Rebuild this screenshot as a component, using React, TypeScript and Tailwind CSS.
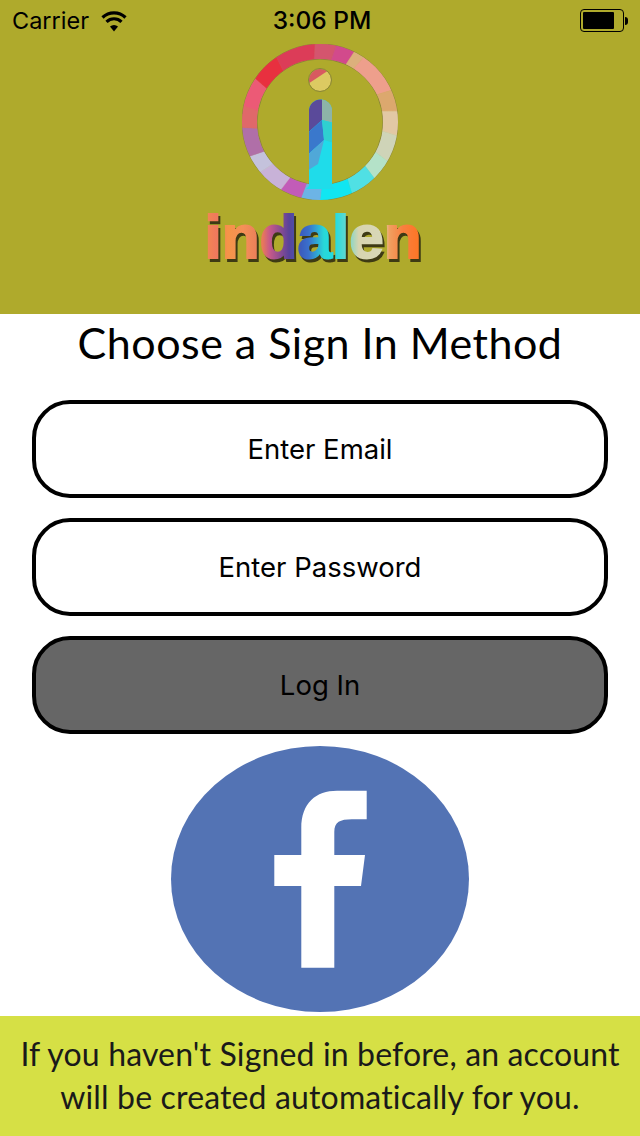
// Sign-in screen for the indalen app
const ringFacets: [number, number, string][] = [
  [-8, 8, "#d4556e"],
  [8, 22, "#d24a8c"],
  [22, 30, "#dcb07c"],
  [30, 62, "#ee9f8c"],
  [62, 78, "#dca86e"],
  [78, 96, "#e2c8a4"],
  [96, 116, "#cfd4b8"],
  [116, 132, "#b4e2c8"],
  [132, 152, "#50e0e4"],
  [152, 176, "#10e6f2"],
  [176, 190, "#6cb4e6"],
  [190, 206, "#c25cb8"],
  [206, 226, "#c8b2d8"],
  [226, 240, "#c4c2dc"],
  [240, 262, "#b06fa8"],
  [262, 278, "#e0686a"],
  [278, 300, "#ec5a76"],
  [300, 322, "#e8303f"],
  [322, 352, "#dc3c58"],
];

function polar(r: number, deg: number) {
  const a = ((deg - 90) * Math.PI) / 180;
  return `${(78 + r * Math.cos(a)).toFixed(1)},${(78 + r * Math.sin(a)).toFixed(1)}`;
}

function Logo() {
  return (
    <svg width="156" height="156" viewBox="0 0 156 156" className="shrink-0">
      <defs>
        <mask id="ring">
          <circle cx="78" cy="78" r="70.5" fill="none" stroke="white" strokeWidth="15" />
        </mask>
        <clipPath id="stem">
          <path d="M67 142V67a11.500 11.500 0 0 1 23 0v75l3 3H64z" />
        </clipPath>
        <clipPath id="dot">
          <circle cx="78" cy="36" r="11" />
        </clipPath>
      </defs>
      <circle cx="78" cy="78" r="78" fill="none" stroke="#8b8738" strokeWidth="1" />
      <circle cx="78" cy="78" r="63" fill="none" stroke="#8b8738" strokeWidth="1" />
      <g mask="url(#ring)">
        {ringFacets.map(([from, to, color]) => (
          <polygon
            key={from}
            fill={color}
            stroke={color}
            strokeWidth="0.5"
            points={`${polar(50, from)} ${polar(90, from + 5)} ${polar(90, to + 5)} ${polar(50, to)}`}
          />
        ))}
      </g>
      <g clipPath="url(#stem)">
        <rect x="60" y="55" width="36" height="95" fill="#1fdcea" />
        <polygon points="60,55 80,55 80,76 60,94" fill="#5a4a9a" />
        <polygon points="80,55 96,55 96,80 80,76" fill="#8db4a8" />
        <polygon points="60,94 80,76 82,96 60,116" fill="#3a78cc" />
        <polygon points="80,76 96,80 96,100 82,96" fill="#2fd0d0" />
        <polygon points="60,116 82,96 76,120 60,130" fill="#50a8d8" />
      </g>
      <g clipPath="url(#dot)">
        <rect x="66" y="24" width="24" height="24" fill="#dcca62" />
        <polygon points="66,24 90,24 66,40" fill="#d85a60" />
        <polygon points="66,40 74,48 66,48" fill="#7a7aa8" />
      </g>
      <circle cx="78" cy="36" r="11.500" fill="none" stroke="#8b8738" strokeWidth="1" />
    </svg>
  );
}

function Field({ label, dark }: { label: string; dark?: boolean }) {
  return (
    <div
      className={`flex h-[98px] items-center justify-center rounded-[38px] border-4 border-black pt-0.5 text-[27.5px] text-black ${dark ? "bg-[#666666]" : "bg-white"}`}
    >
      {label}
    </div>
  );
}

function FacebookButton() {
  return (
    <svg width="298" height="266" viewBox="171 746 298 266" className="mx-auto mt-3 shrink-0">
      <ellipse cx="320" cy="879" rx="149" ry="133" fill="#5373b4" />
      <path
        d="M366.700 790.700V819.300H352C340 819.300 334.300 822 334.300 832V855H365L361 886H334.300V967.700H301.300V886H274.300V855H301.300V828C301.300 803 316 790.700 337 790.700Z"
        fill="white"
      />
    </svg>
  );
}

export default function App() {
  return (
    <main className="flex h-[1136px] w-[640px] flex-col overflow-hidden bg-white font-['Inter','Liberation_Sans',sans-serif]">
      <header className="flex h-[314px] shrink-0 flex-col items-center bg-[#afaa2c]">
        <div className="grid h-10 w-full shrink-0 grid-cols-[1fr_auto_1fr] items-center px-3 pt-px text-black">
          <div className="flex items-center gap-3 text-[23.5px]">
            <span>Carrier</span>
            <svg width="26" height="22" viewBox="0 0 26 22" fill="none" stroke="black" strokeWidth="3.200">
              <path d="M1.500 7.500a16.500 16.500 0 0 1 23 0" />
              <path d="M5.500 11.800a10.800 10.800 0 0 1 15 0" />
              <path d="M13 21.500l-4-5a6 6 0 0 1 8 0z" fill="black" stroke="none" />
            </svg>
          </div>
          <span className="pl-1 text-[24.5px] font-medium">3:06 PM</span>
          <div className="flex items-center justify-end">
            <div className="h-[23px] w-[44px] rounded-[4px] border border-black p-[2px]">
              <div className="h-full w-[31px] rounded-[1px] bg-black" />
            </div>
            <div className="ml-[1px] h-[8px] w-[3px] rounded-r-sm bg-black" />
          </div>
        </div>
        <div className="mt-1">
          <Logo />
        </div>
        <div className="mt-[4px] -ml-[14px] bg-[linear-gradient(90deg,#f28a4e_0%,#f0785e_6%,#f59448_11%,#f49058_18%,#e8785a_27%,#c85a88_30%,#5a429a_39%,#3a60c0_45%,#3a70cc_48%,#28d8d8_55%,#20dce0_60%,#60d8d0_65%,#d8d4b0_71%,#d8d8b8_82%,#f0a060_85%,#f88040_91%,#ff7420_100%)] bg-clip-text font-['Liberation_Sans',sans-serif] text-[62px] leading-[66px] font-bold text-transparent drop-shadow-[2px_3px_0_#3e3a14] [-webkit-text-stroke:2px_transparent]">
          indalen
        </div>
      </header>

      <h1 className="flex h-[86px] shrink-0 items-start justify-center pt-[2px] font-['Lato',sans-serif] text-[43px] leading-[54px] font-normal tracking-[0.5px] text-black">
        Choose a Sign In Method
      </h1>

      <div className="flex flex-col gap-5 px-8">
        <Field label="Enter Email" />
        <Field label="Enter Password" />
        <Field label="Log In" dark />
      </div>

      <FacebookButton />

      <footer className="mt-1 flex h-[120px] shrink-0 items-center justify-center bg-[#d6e045] pb-[3px] text-center font-['Lato',sans-serif] text-[32px] leading-[43px] tracking-[0.15px] text-[#1a1a1a]">
        <p>
          If you haven't Signed in before, an account
          <br />
          will be created automatically for you.
        </p>
      </footer>
    </main>
  );
}
